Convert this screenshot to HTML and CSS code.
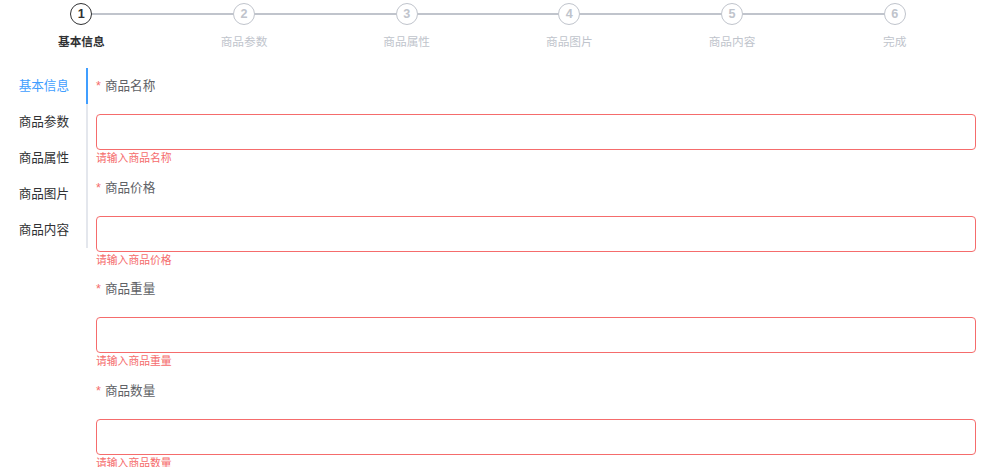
FILE: index.html
```html
<!DOCTYPE html>
<html lang="zh-CN">

<head>
    <meta charset="UTF-8">
    <link rel="stylesheet" href="styles.css">
</head>

<body>
    <div class="page">
        <div class="steps">
            <div class="step is-process">
                <div class="step-head"><span class="step-line"></span><span class="step-icon">1</span></div>
                <div class="step-title">基本信息</div>
            </div>
            <div class="step">
                <div class="step-head"><span class="step-line"></span><span class="step-icon">2</span></div>
                <div class="step-title">商品参数</div>
            </div>
            <div class="step">
                <div class="step-head"><span class="step-line"></span><span class="step-icon">3</span></div>
                <div class="step-title">商品属性</div>
            </div>
            <div class="step">
                <div class="step-head"><span class="step-line"></span><span class="step-icon">4</span></div>
                <div class="step-title">商品图片</div>
            </div>
            <div class="step">
                <div class="step-head"><span class="step-line"></span><span class="step-icon">5</span></div>
                <div class="step-title">商品内容</div>
            </div>
            <div class="step">
                <div class="step-head"><span class="step-icon">6</span></div>
                <div class="step-title">完成</div>
            </div>
        </div>

        <div class="tabs">
            <div class="tabs-nav">
                <div class="tab-item is-active">基本信息</div>
                <div class="tab-item">商品参数</div>
                <div class="tab-item">商品属性</div>
                <div class="tab-item">商品图片</div>
                <div class="tab-item">商品内容</div>
            </div>
            <div class="tabs-content">
                <form class="form">
                    <div class="form-item">
                        <label class="form-label"><span class="req">*</span>商品名称</label>
                        <div class="form-control">
                            <input class="form-input" type="text">
                            <div class="form-error">请输入商品名称</div>
                        </div>
                    </div>
                    <div class="form-item">
                        <label class="form-label"><span class="req">*</span>商品价格</label>
                        <div class="form-control">
                            <input class="form-input" type="text">
                            <div class="form-error">请输入商品价格</div>
                        </div>
                    </div>
                    <div class="form-item">
                        <label class="form-label"><span class="req">*</span>商品重量</label>
                        <div class="form-control">
                            <input class="form-input" type="text">
                            <div class="form-error">请输入商品重量</div>
                        </div>
                    </div>
                    <div class="form-item">
                        <label class="form-label"><span class="req">*</span>商品数量</label>
                        <div class="form-control">
                            <input class="form-input" type="text">
                            <div class="form-error">请输入商品数量</div>
                        </div>
                    </div>
                </form>
            </div>
        </div>
    </div>
</body>

</html>
```

FILE: styles.css
```css
body {
    font-family: "Helvetica Neue", Helvetica, "Liberation Sans", "Noto Sans CJK SC", sans-serif;
    background-color: #fff;
    margin: 0;
    overflow: hidden;
}

.page {
    width: 976px;
}

/* steps */
.steps {
    display: flex;
    padding-top: 3px;
    height: 59px;
    margin-bottom: 6px;
}

.step {
    flex: 1;
    text-align: center;
    color: #c0c4cc;
}

.step-head {
    position: relative;
    height: 22px;
}

.step-line {
    position: absolute;
    top: 10px;
    left: 50%;
    right: -50%;
    height: 2px;
    background-color: #c0c4cc;
}

.step-icon {
    position: relative;
    z-index: 1;
    display: inline-flex;
    align-items: center;
    justify-content: center;
    box-sizing: border-box;
    width: 22px;
    height: 22px;
    border: 1.8px solid #c0c4cc;
    border-radius: 50%;
    background-color: #fff;
    font-size: 12.6px;
    font-weight: 700;
}

.step-title {
    font-size: 11.7px;
    line-height: 34px;
}

.step.is-process {
    color: #303133;
}

.step.is-process .step-icon {
    border-color: #303133;
}

.step.is-process .step-title {
    font-weight: 700;
}

/* tabs */
.tabs {
    display: flex;
    align-items: flex-start;
}

.tabs-nav {
    width: 88px;
    flex-shrink: 0;
}

.tab-item {
    box-sizing: border-box;
    height: 36px;
    line-height: 36px;
    padding-right: 17px;
    text-align: right;
    font-size: 12.6px;
    color: #303133;
    border-right: 2px solid #e4e7ed;
}

.tab-item.is-active {
    color: #409eff;
    border-right-color: #409eff;
}

.tabs-content {
    flex: 1;
    padding-left: 8px;
}

/* form */
.form-item {
    margin-bottom: 19.7px;
}

.form-label {
    display: block;
    height: 36px;
    line-height: 36px;
    padding-bottom: 10px;
    font-size: 12.6px;
    color: #606266;
}

.req {
    color: #f56c6c;
    margin-right: 4px;
}

.form-control {
    position: relative;
}

.form-input {
    display: block;
    box-sizing: border-box;
    width: 100%;
    height: 36px;
    margin: 0;
    padding: 0 13px;
    border: 1px solid #f56c6c;
    border-radius: 4px;
    outline: none;
    font-size: 12.6px;
}

.form-error {
    position: absolute;
    top: 100%;
    left: 0;
    padding-top: 3px;
    font-size: 10.8px;
    line-height: 1;
    color: #f56c6c;
}
```
